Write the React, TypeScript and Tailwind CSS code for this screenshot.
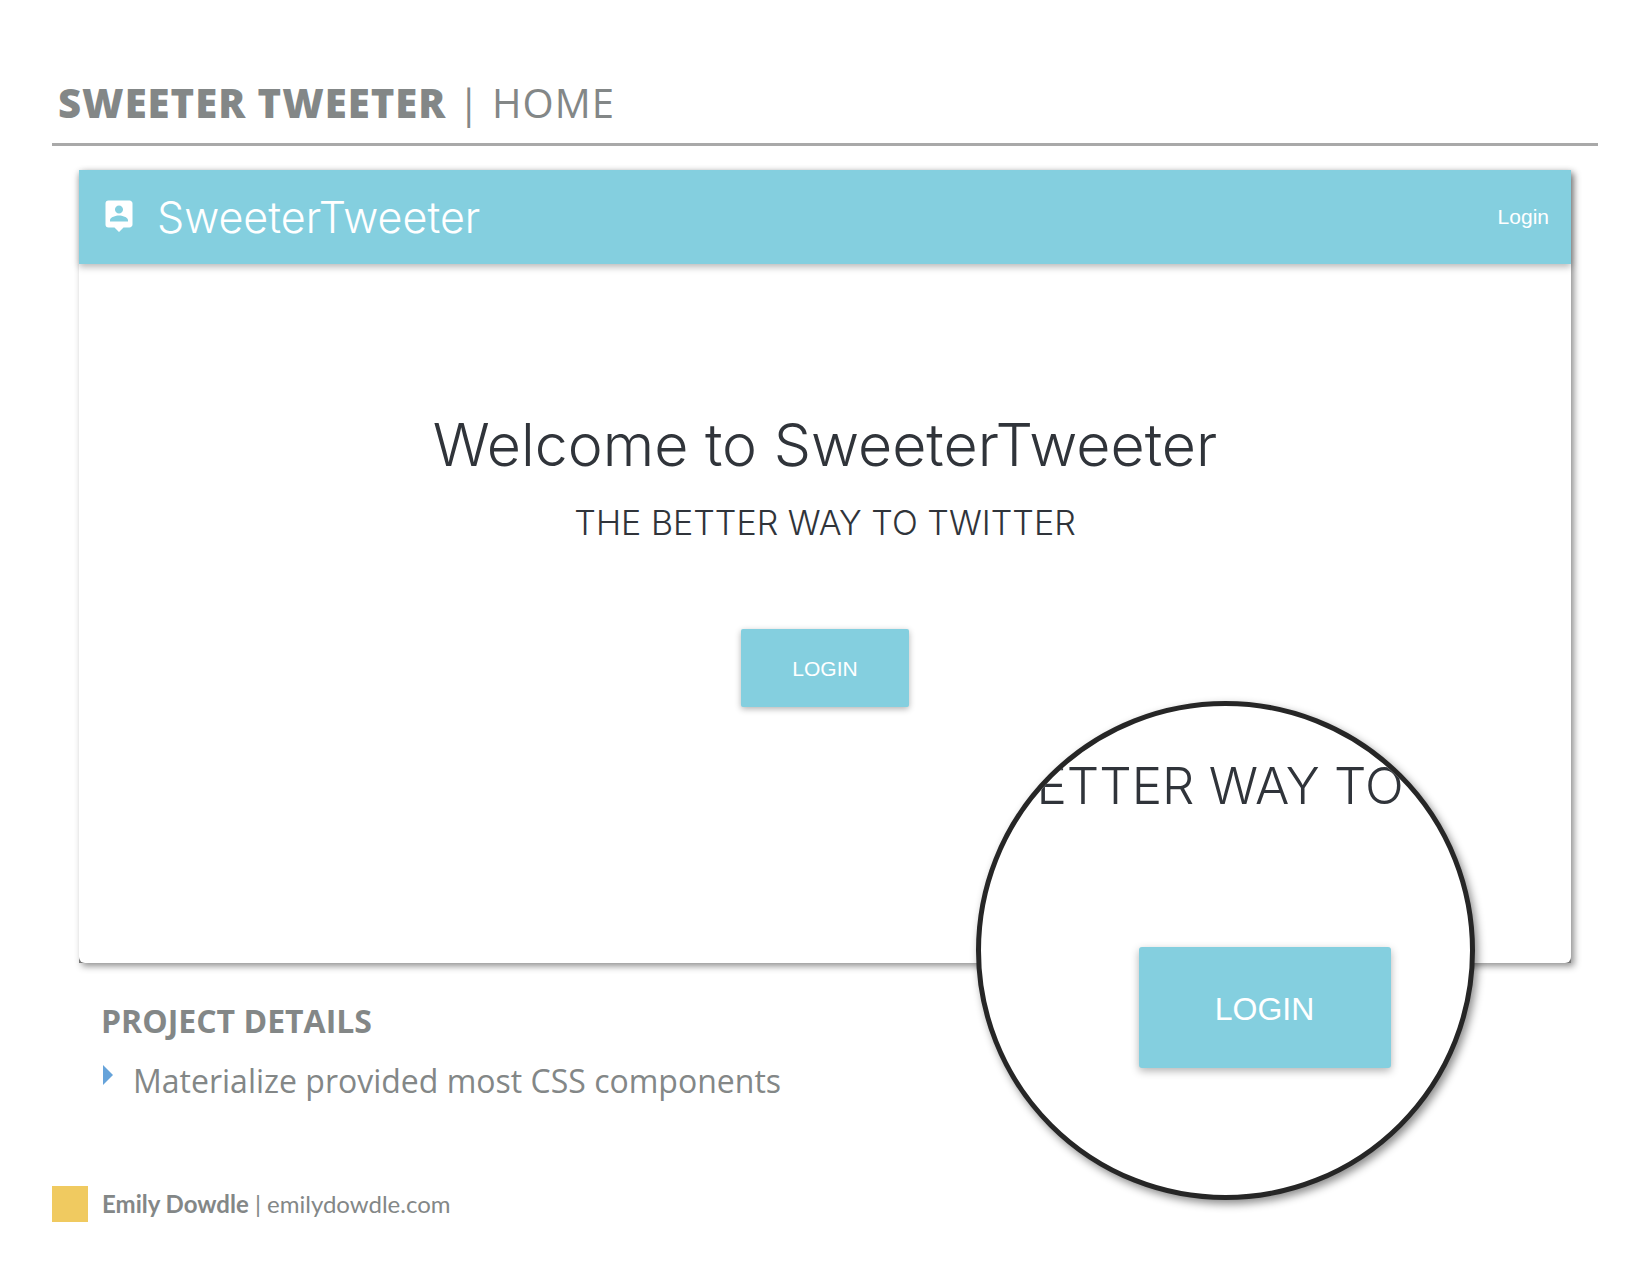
import React from "react";

function PersonPinIcon() {
  return (
    <svg viewBox="0 0 24 24" className="size-9 fill-white" aria-hidden="true">
      <path d="M19 1H5a2 2 0 0 0-2 2v14a2 2 0 0 0 2 2h4l3 3 3-3h4c1.1 0 2-.9 2-2V3c0-1.1-.9-2-2-2zm-7 3.3c1.49 0 2.7 1.21 2.7 2.7 0 1.49-1.21 2.7-2.7 2.7-1.49 0-2.7-1.21-2.7-2.7 0-1.49 1.21-2.7 2.7-2.7zM18 15H6v-.9c0-2 4-3.1 6-3.1s6 1.1 6 3.1v.9z" />
    </svg>
  );
}

function Magnifier() {
  return (
    <div className="absolute right-[96px] -bottom-[237px] size-[499px] overflow-hidden rounded-full border-5 border-[#262626] bg-white shadow-[3px_4px_8px_rgba(0,0,0,0.45)]">
      <div className="flex flex-col items-center pt-[48px] pl-[78px]">
        <p className="text-[51px] leading-[64px] font-light whitespace-nowrap">
          THE BETTER WAY TO TWITTER
        </p>
        <button
          type="button"
          className="mt-[129px] h-[121px] w-[252px] rounded-[3px] bg-[#84cfdf] pt-[2px] font-['Liberation_Sans',sans-serif] text-[32px] text-white shadow-[0_3px_8px_rgba(0,0,0,0.3)]"
        >
          LOGIN
        </button>
      </div>
    </div>
  );
}

export default function App() {
  return (
    <div className="bg-white px-[52px] pt-[74px] pb-[54px] font-['Open_Sans',sans-serif] text-[#838787]">
      <header className="border-b-3 border-[#a9a9a9] px-[6px] pb-[11px]">
        <h1 className="text-[40px] leading-[58px] tracking-wide">
          <span className="font-extrabold">SWEETER TWEETER</span> | HOME
        </h1>
      </header>

      <main>
        <section className="relative mx-[27px] mt-[24px] bg-[#777] font-[Inter,sans-serif] text-[#30343a] shadow-[3px_3px_7px_rgba(0,0,0,0.45)]">
          <div className="rounded-b-md bg-white pb-[256px]">
            <nav className="flex h-[94px] items-center bg-[#84cfdf] px-[22px] text-white shadow-[0_3px_7px_rgba(0,0,0,0.28)]">
              <PersonPinIcon />
              <a href="#" className="ml-[20px] text-[43px] leading-[52px] font-light">
                SweeterTweeter
              </a>
              <a href="#" className="ml-auto font-['Liberation_Sans',sans-serif] text-[21px]">
                Login
              </a>
            </nav>
            <div className="flex flex-col items-center pt-[143px]">
              <h2 className="text-[59px] leading-[76px] font-light">Welcome to SweeterTweeter</h2>
              <p className="mt-[20px] text-[34px] leading-[40px] font-light">
                THE BETTER WAY TO TWITTER
              </p>
              <button
                type="button"
                className="mt-[86px] h-[78px] w-[168px] rounded-[2px] bg-[#84cfdf] pt-[2px] font-['Liberation_Sans',sans-serif] text-[21px] text-white shadow-[0_2px_6px_rgba(0,0,0,0.3)]"
              >
                LOGIN
              </button>
            </div>
          </div>
          <Magnifier />
        </section>

        <section className="px-[49px] pt-[34px]">
          <h2 className="text-[32px] leading-[48px] font-bold">PROJECT DETAILS</h2>
          <ul className="mt-[12px]">
            <li className="flex items-start gap-[20px] pl-[2px] text-[32px] leading-[48px]">
              <svg viewBox="0 0 10 20" className="mt-[8px] h-[20px] w-[10px]" aria-hidden="true">
                <path d="M0 0L10 10L0 20Z" fill="#66a3da" />
              </svg>
              Materialize provided most CSS components
            </li>
          </ul>
        </section>
      </main>

      <footer className="mt-[81px] flex items-center gap-[14px] font-[Lato,sans-serif] text-[24px] leading-[36px]">
        <span className="size-[36px] bg-[#f0ca60]" />
        <p>
          <strong className="font-bold">Emily Dowdle</strong> |{" "}
          <a href="#">emilydowdle.com</a>
        </p>
      </footer>
    </div>
  );
}
